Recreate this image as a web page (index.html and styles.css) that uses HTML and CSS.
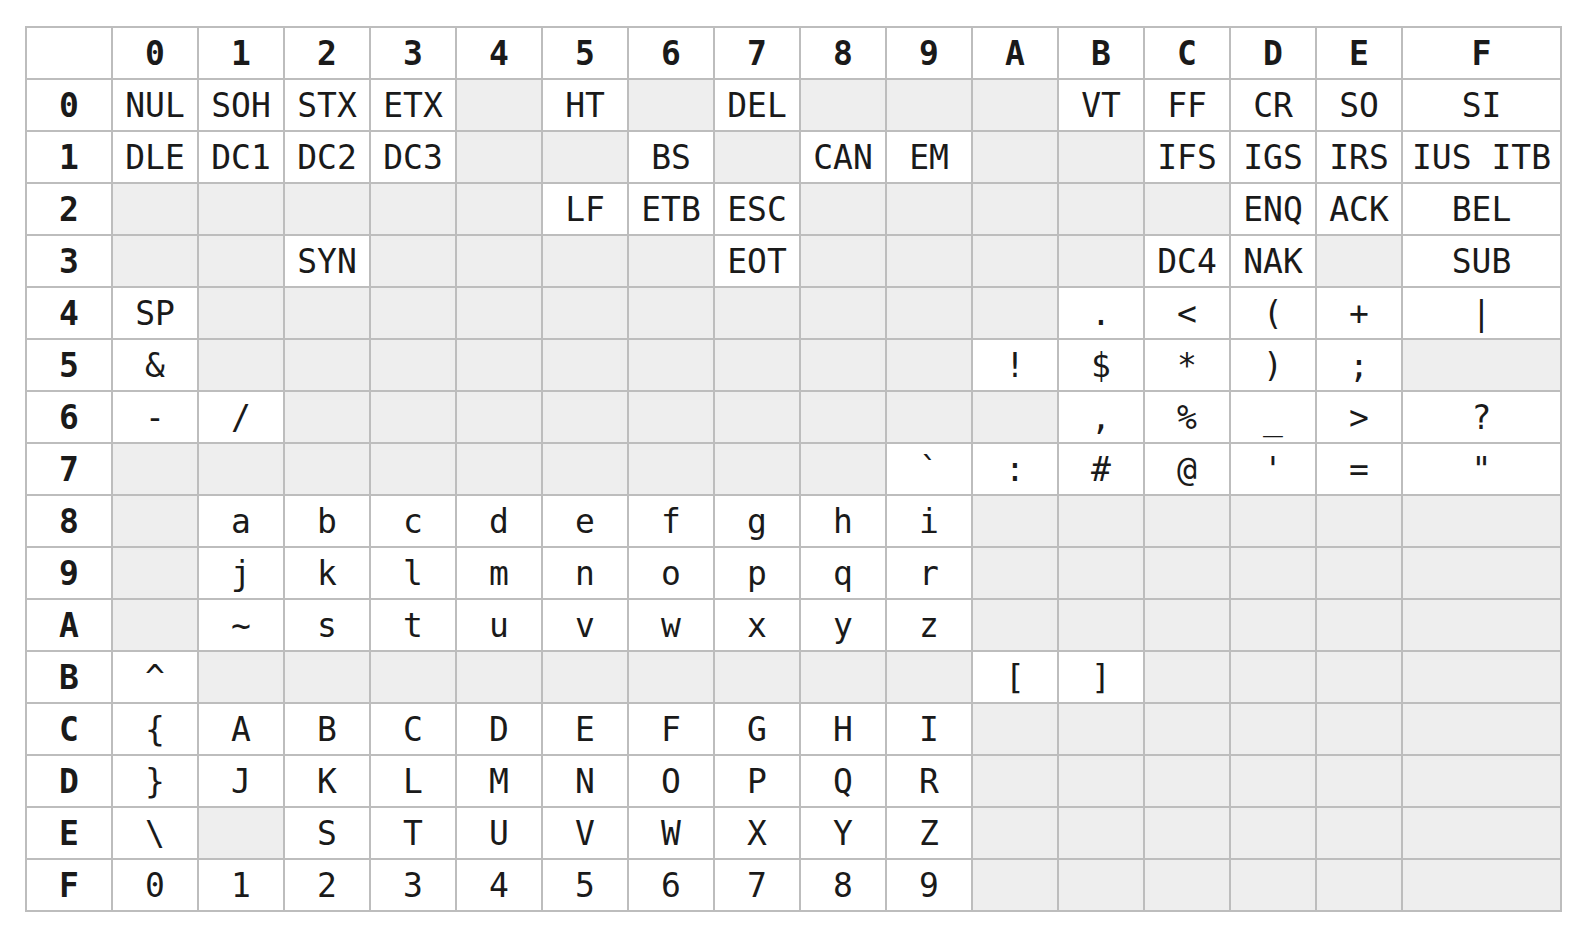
FILE: index.html
```html
<!DOCTYPE html>
<html>
<head>
<meta charset="utf-8">
<title>EBCDIC</title>
<link rel="stylesheet" href="styles.css">
</head>
<body>
<div class="page">
<div class="grid">
<div class="c h"></div><div class="c h">0</div><div class="c h">1</div><div class="c h">2</div><div class="c h">3</div><div class="c h">4</div><div class="c h">5</div><div class="c h">6</div><div class="c h">7</div><div class="c h">8</div><div class="c h">9</div><div class="c h">A</div><div class="c h">B</div><div class="c h">C</div><div class="c h">D</div><div class="c h">E</div><div class="c h">F</div>

<div class="c h">0</div><div class="c">NUL</div><div class="c">SOH</div><div class="c">STX</div><div class="c">ETX</div><div class="c e"></div><div class="c">HT</div><div class="c e"></div><div class="c">DEL</div><div class="c e"></div><div class="c e"></div><div class="c e"></div><div class="c">VT</div><div class="c">FF</div><div class="c">CR</div><div class="c">SO</div><div class="c">SI</div>

<div class="c h">1</div><div class="c">DLE</div><div class="c">DC1</div><div class="c">DC2</div><div class="c">DC3</div><div class="c e"></div><div class="c e"></div><div class="c">BS</div><div class="c e"></div><div class="c">CAN</div><div class="c">EM</div><div class="c e"></div><div class="c e"></div><div class="c">IFS</div><div class="c">IGS</div><div class="c">IRS</div><div class="c">IUS ITB</div>

<div class="c h">2</div><div class="c e"></div><div class="c e"></div><div class="c e"></div><div class="c e"></div><div class="c e"></div><div class="c">LF</div><div class="c">ETB</div><div class="c">ESC</div><div class="c e"></div><div class="c e"></div><div class="c e"></div><div class="c e"></div><div class="c e"></div><div class="c">ENQ</div><div class="c">ACK</div><div class="c">BEL</div>

<div class="c h">3</div><div class="c e"></div><div class="c e"></div><div class="c">SYN</div><div class="c e"></div><div class="c e"></div><div class="c e"></div><div class="c e"></div><div class="c">EOT</div><div class="c e"></div><div class="c e"></div><div class="c e"></div><div class="c e"></div><div class="c">DC4</div><div class="c">NAK</div><div class="c e"></div><div class="c">SUB</div>

<div class="c h">4</div><div class="c">SP</div><div class="c e"></div><div class="c e"></div><div class="c e"></div><div class="c e"></div><div class="c e"></div><div class="c e"></div><div class="c e"></div><div class="c e"></div><div class="c e"></div><div class="c e"></div><div class="c">.</div><div class="c">&lt;</div><div class="c">(</div><div class="c">+</div><div class="c">|</div>

<div class="c h">5</div><div class="c">&amp;</div><div class="c e"></div><div class="c e"></div><div class="c e"></div><div class="c e"></div><div class="c e"></div><div class="c e"></div><div class="c e"></div><div class="c e"></div><div class="c e"></div><div class="c">!</div><div class="c">$</div><div class="c">*</div><div class="c">)</div><div class="c">;</div><div class="c e"></div>

<div class="c h">6</div><div class="c">-</div><div class="c">/</div><div class="c e"></div><div class="c e"></div><div class="c e"></div><div class="c e"></div><div class="c e"></div><div class="c e"></div><div class="c e"></div><div class="c e"></div><div class="c e"></div><div class="c">,</div><div class="c">%</div><div class="c">_</div><div class="c">&gt;</div><div class="c">?</div>

<div class="c h">7</div><div class="c e"></div><div class="c e"></div><div class="c e"></div><div class="c e"></div><div class="c e"></div><div class="c e"></div><div class="c e"></div><div class="c e"></div><div class="c e"></div><div class="c">`</div><div class="c">:</div><div class="c">#</div><div class="c">@</div><div class="c">'</div><div class="c">=</div><div class="c">"</div>

<div class="c h">8</div><div class="c e"></div><div class="c">a</div><div class="c">b</div><div class="c">c</div><div class="c">d</div><div class="c">e</div><div class="c">f</div><div class="c">g</div><div class="c">h</div><div class="c">i</div><div class="c e"></div><div class="c e"></div><div class="c e"></div><div class="c e"></div><div class="c e"></div><div class="c e"></div>

<div class="c h">9</div><div class="c e"></div><div class="c">j</div><div class="c">k</div><div class="c">l</div><div class="c">m</div><div class="c">n</div><div class="c">o</div><div class="c">p</div><div class="c">q</div><div class="c">r</div><div class="c e"></div><div class="c e"></div><div class="c e"></div><div class="c e"></div><div class="c e"></div><div class="c e"></div>

<div class="c h">A</div><div class="c e"></div><div class="c">~</div><div class="c">s</div><div class="c">t</div><div class="c">u</div><div class="c">v</div><div class="c">w</div><div class="c">x</div><div class="c">y</div><div class="c">z</div><div class="c e"></div><div class="c e"></div><div class="c e"></div><div class="c e"></div><div class="c e"></div><div class="c e"></div>

<div class="c h">B</div><div class="c">^</div><div class="c e"></div><div class="c e"></div><div class="c e"></div><div class="c e"></div><div class="c e"></div><div class="c e"></div><div class="c e"></div><div class="c e"></div><div class="c e"></div><div class="c">[</div><div class="c">]</div><div class="c e"></div><div class="c e"></div><div class="c e"></div><div class="c e"></div>

<div class="c h">C</div><div class="c">{</div><div class="c">A</div><div class="c">B</div><div class="c">C</div><div class="c">D</div><div class="c">E</div><div class="c">F</div><div class="c">G</div><div class="c">H</div><div class="c">I</div><div class="c e"></div><div class="c e"></div><div class="c e"></div><div class="c e"></div><div class="c e"></div><div class="c e"></div>

<div class="c h">D</div><div class="c">}</div><div class="c">J</div><div class="c">K</div><div class="c">L</div><div class="c">M</div><div class="c">N</div><div class="c">O</div><div class="c">P</div><div class="c">Q</div><div class="c">R</div><div class="c e"></div><div class="c e"></div><div class="c e"></div><div class="c e"></div><div class="c e"></div><div class="c e"></div>

<div class="c h">E</div><div class="c">\</div><div class="c e"></div><div class="c">S</div><div class="c">T</div><div class="c">U</div><div class="c">V</div><div class="c">W</div><div class="c">X</div><div class="c">Y</div><div class="c">Z</div><div class="c e"></div><div class="c e"></div><div class="c e"></div><div class="c e"></div><div class="c e"></div><div class="c e"></div>

<div class="c h">F</div><div class="c">0</div><div class="c">1</div><div class="c">2</div><div class="c">3</div><div class="c">4</div><div class="c">5</div><div class="c">6</div><div class="c">7</div><div class="c">8</div><div class="c">9</div><div class="c e"></div><div class="c e"></div><div class="c e"></div><div class="c e"></div><div class="c e"></div><div class="c e"></div>
</div>
</div>
</body>
</html>
```

FILE: styles.css
```css
html, body {
  margin: 0;
  padding: 0;
  background: #ffffff;
}

.page {
  padding: 26px 0 0 25px;
}

.grid {
  display: grid;
  grid-template-columns: repeat(16, 84px) 157px;
  grid-auto-rows: 50px;
  gap: 2px;
  width: max-content;
  background: #bdbdbd;
  border: 2px solid #bdbdbd;
  font-family: "DejaVu Sans Mono", "Liberation Mono", monospace;
  font-size: 33px;
  color: #1a1a1a;
}

.c {
  background: #ffffff;
  display: flex;
  align-items: center;
  justify-content: center;
  white-space: pre;
  line-height: 1;
}

.c.e {
  background: #eeeeee;
}

.c.h {
  font-weight: bold;
}
```
